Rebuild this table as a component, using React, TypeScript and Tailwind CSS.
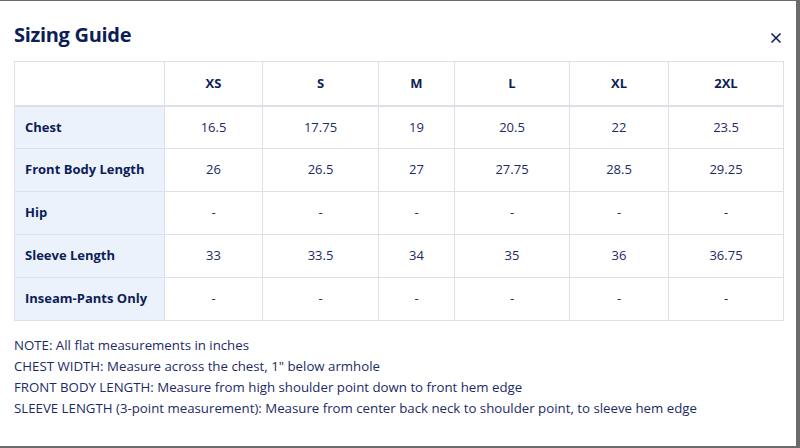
import { X } from "lucide-react";

const sizes = ["XS", "S", "M", "L", "XL", "2XL"];
const colWidths = ["w-[98px]", "w-[116px]", "w-[76px]", "w-[115px]", "w-[99px]", "w-[115px]"];

const rows: { label: string; values: string[] }[] = [
  { label: "Chest", values: ["16.5", "17.75", "19", "20.5", "22", "23.5"] },
  { label: "Front Body Length", values: ["26", "26.5", "27", "27.75", "28.5", "29.25"] },
  { label: "Hip", values: ["-", "-", "-", "-", "-", "-"] },
  { label: "Sleeve Length", values: ["33", "33.5", "34", "35", "36", "36.75"] },
  { label: "Inseam-Pants Only", values: ["-", "-", "-", "-", "-", "-"] },
];

const notes = [
  "NOTE: All flat measurements in inches",
  'CHEST WIDTH: Measure across the chest, 1" below armhole',
  "FRONT BODY LENGTH: Measure from high shoulder point down to front hem edge",
  "SLEEVE LENGTH (3-point measurement): Measure from center back neck to shoulder point, to sleeve hem edge",
];

export default function App() {
  return (
    <div className="w-[800px] h-[448px] bg-[#6b6b6b] overflow-hidden font-['Open_Sans',sans-serif]">
      <div className="w-[796px] h-[445px] mt-[1px] bg-white px-[14px] pt-[20px]">
        <div className="flex items-center justify-between h-[28px]">
          <h2 className="text-[20px] font-bold text-[#0d1d57] tracking-[-0.3px]">Sizing Guide</h2>
          <button className="-mr-[2px] mt-[6px] text-[#0d1d57]">
            <X size={16} strokeWidth={2.5} />
          </button>
        </div>

        <table className="mt-[12px] w-[769px] border-collapse table-fixed text-[13px] text-[#1c2a66]">
          <colgroup>
            <col className="w-[150px]" />
            {colWidths.map((w, i) => (
              <col key={i} className={w} />
            ))}
          </colgroup>
          <thead>
            <tr className="h-[44px] border-b-2 border-[#dde0e6]">
              <th className="border border-[#dde0e6]"></th>
              {sizes.map((s) => (
                <th key={s} className="border border-[#dde0e6] font-bold text-[#0d1d57] text-center">
                  {s}
                </th>
              ))}
            </tr>
          </thead>
          <tbody>
            {rows.map((row) => (
              <tr key={row.label} className="h-[43px]">
                <td className="border border-[#dde0e6] bg-[#ebf2fb] font-bold text-[#0d1d57] pl-[10px]">
                  {row.label}
                </td>
                {row.values.map((v, i) => (
                  <td key={i} className="border border-[#dde0e6] text-center">
                    {v}
                  </td>
                ))}
              </tr>
            ))}
          </tbody>
        </table>

        <div className="mt-[14px] text-[13.25px] leading-[21px] text-[#1c2a66]">
          {notes.map((n) => (
            <p key={n}>{n}</p>
          ))}
        </div>
      </div>
    </div>
  );
}
